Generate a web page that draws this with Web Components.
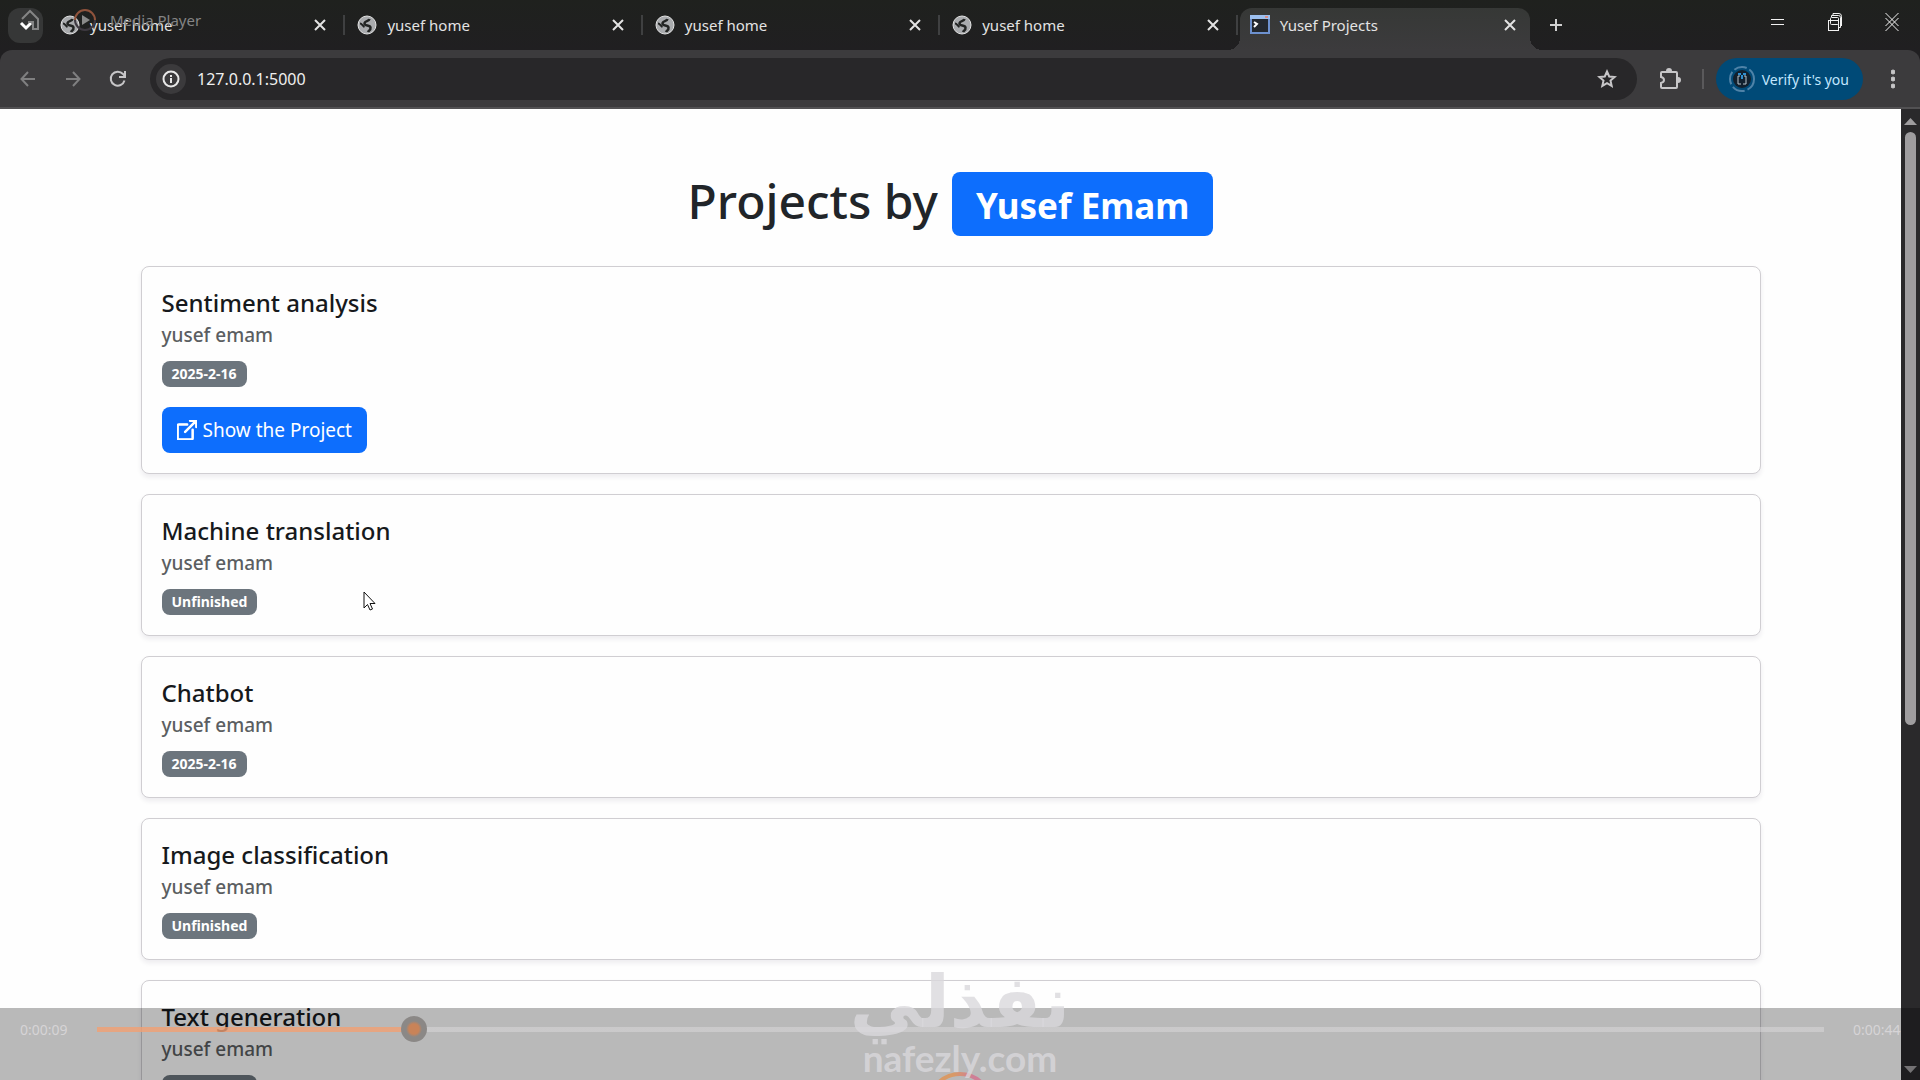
<!DOCTYPE html>
<html lang="en">
<head>
<meta charset="utf-8">
<title>Yusef Projects</title>
<style>
	body {
		margin: 0;
		height: 100vh;
		overflow: hidden;
		font-family: "Noto Sans", "Open Sans", sans-serif;
		color: #212529;
		background: #fefefe;
	}
</style>
</head>
<body>
<app-window>
	<tab-strip slot="tabs">
		<browser-tab>yusef home</browser-tab>
		<browser-tab>yusef home</browser-tab>
		<browser-tab>yusef home</browser-tab>
		<browser-tab>yusef home</browser-tab>
		<browser-tab active>Yusef Projects</browser-tab>
	</tab-strip>
	<tool-bar slot="toolbar" address="127.0.0.1:5000">Verify it's you</tool-bar>
	<project-list owner="Yusef Emam">
		<project-card status="2025-2-16" href="#sentiment">Sentiment analysis<span slot="author">yusef emam</span></project-card>
		<project-card status="Unfinished">Machine translation<span slot="author">yusef emam</span></project-card>
		<project-card status="2025-2-16">Chatbot<span slot="author">yusef emam</span></project-card>
		<project-card status="Unfinished">Image classification<span slot="author">yusef emam</span></project-card>
		<project-card status="Unfinished">Text generation<span slot="author">yusef emam</span></project-card>
	</project-list>
	<scroll-bar slot="scroll"></scroll-bar>
</app-window>
<player-title>Media Player</player-title>
<player-bar elapsed="0:00:09" remaining="0:00:44"></player-bar>
<water-mark>نفذلي<span slot="site">nafezly.com</span></water-mark>
<mouse-pointer></mouse-pointer>

<script>
// Helper function to open the shadow root and fill it
const render = (el, html) => {
	const shadow = el.attachShadow({ mode: 'open' });
	shadow.innerHTML = `<style>
		* { box-sizing: border-box; }
		svg { display: block; fill: none; stroke: currentColor; }
		button { font: inherit; color: inherit; background: none; border: 0; padding: 0; margin: 0; display: grid; place-items: center; }
	</style>` + html;
	return shadow;
};

const globeIcon = `
	<svg width="20" height="20" viewBox="0 0 20 20" stroke="none">
		<circle cx="10" cy="10" r="9" fill="#a9abae"/>
		<path d="M12.500 4c-.5 2.800-5 1.500-5 4.500s5.500 1 6 4-2 3-2.500 4.500" stroke="#222423" stroke-width="2.500"/>
		<path d="M3 8.500c2 0 2.500 2.500 4.500 3.500" stroke="#222423" stroke-width="2"/>
	</svg>`;

const consoleIcon = `
	<svg width="20" height="20" viewBox="0 0 20 20">
		<rect x="1" y="1" width="18" height="17" fill="#23282e" stroke="#6d91cf" stroke-width="2"/>
		<path d="M0 2h20" stroke="#9dc0f0" stroke-width="4"/>
		<path d="M15 2h3" stroke="#d98f8a" stroke-width="2"/>
		<path d="M4 7l3 2-3 3" stroke="#fff" stroke-width="2"/>
	</svg>`;

class AppWindow extends HTMLElement {
	constructor() {
		super();
		render(this, `
			<style>
			:host { display: flex; flex-direction: column; height: 100%; }
			.view { flex: 1; min-height: 0; display: flex; }
			main { flex: 1; overflow: hidden; }
			</style>
			<slot name="tabs"></slot>
			<slot name="toolbar"></slot>
			<div class="view">
				<main><slot></slot></main>
				<slot name="scroll"></slot>
			</div>
		`);
	}
}

class TabStrip extends HTMLElement {
	constructor() {
		super();
		render(this, `
			<style>
			:host { display: flex; height: 50px; background: linear-gradient(#1f211e, #201f21); color: #e3e3e3; }
			.search { width: 35px; height: 35px; margin: 8px 7px 0 8px; border-radius: 12px; background: #363737; color: #fff; }
			.tabs { flex: 1; display: flex; max-width: 1480px; }
			.add { width: 34px; height: 50px; margin-left: 9px; color: #d0d0d0; }
			.controls { margin-left: auto; display: flex; color: #f2f2f2; }
			.controls button { width: 57px; height: 44px; }
			</style>
			<button class="search" aria-label="Search tabs"><svg width="14" height="10" viewBox="0 0 14 10" stroke-width="3"><path d="M2 2l5 5 5-5"/></svg></button>
			<div class="tabs"><slot></slot></div>
			<button class="add" aria-label="New tab"><svg width="14" height="14" viewBox="0 0 14 14" stroke-width="2"><path d="M7 1v12M1 7h12"/></svg></button>
			<div class="controls">
				<button aria-label="Minimize"><svg width="14" height="14" viewBox="0 0 14 14"><path d="M0 4.500h13M0 9.500h13"/></svg></button>
				<button aria-label="Restore"><svg width="14" height="20" viewBox="0 0 14 20"><rect x=".5" y="8.500" width="10" height="10"/><rect x="2.500" y="5.500" width="8" height="7" rx="1"/><path d="M3.500 5V3.500h7q2 0 2 2v10H11M5 3V1.500h6q2.500 0 2.500 3V14"/></svg></button>
				<button aria-label="Close"><svg width="14" height="20" viewBox="0 0 14 20" stroke="#fff"><path d="M.5 1l13 13M13.500 1L.5 14M.5 6l13 13M13.500 6L.5 19"/></svg></button>
			</div>
		`);
	}
}

class BrowserTab extends HTMLElement {
	constructor() {
		super();
		render(this, `
			<style>
			:host { position: relative; flex: 1 1 297px; box-sizing: border-box; display: flex; align-items: center; height: 50px; padding: 0 2px 0 10px; font-size: 15px; }
			.title { flex: 1; margin-left: 10px; line-height: 20px; }
			button { width: 22px; height: 22px; }
			.sep { width: 2px; height: 20px; margin-left: 12px; background: #3f4041; }
			:host([active]) { flex-basis: 290px; height: 42px; margin-top: 8px; padding: 0 0 8px 10px; background: linear-gradient(#363836, #3c3b3d); border-radius: 12px 12px 0 0; }
			:host([active])::before, :host([active])::after { content: ""; position: absolute; bottom: 0; width: 12px; height: 12px; }
			:host([active])::before { left: -12px; background: radial-gradient(circle at 0 0, transparent 12px, #3c3b3d 12px); }
			:host([active])::after { right: -12px; background: radial-gradient(circle at 100% 0, transparent 12px, #3c3b3d 12px); }
			:host([active]) .sep { width: 0; margin-left: 9px; }
			</style>
			${this.hasAttribute('active') ? consoleIcon : globeIcon}
			<span class="title"><slot></slot></span>
			<button aria-label="Close tab"><svg width="12" height="12" viewBox="0 0 12 12" stroke-width="2"><path d="M1 1l10 10M11 1L1 11"/></svg></button>
			<span class="sep"></span>
		`);
	}
}

class ToolBar extends HTMLElement {
	constructor() {
		super();
		render(this, `
			<style>
			:host { display: block; background: #201f21; }
			.bar { display: flex; align-items: center; height: 59px; padding: 1px 9px 0 5px; background: #3c3b3d; border-bottom: 2px solid #525153; border-radius: 12px 12px 0 0; color: #c7c6c8; }
			.nav { width: 45px; height: 42px; }
			.off { color: #7f7f80; }
			.omnibox { flex: 1; display: flex; align-items: center; height: 42px; margin: 0 21px 0 10px; padding: 0 20px 0 6px; border-radius: 21px; background: #282729; }
			.info { width: 30px; height: 30px; border-radius: 15px; background: #3b3a3c; color: #e8e8e8; }
			input { flex: 1; min-width: 0; margin-left: 11px; padding: 0; border: 0; outline: 0; background: none; font: inherit; font-size: 16px; color: #efefef; }
			.sep { width: 2px; height: 20px; margin: 0 12px 0 20px; background: #5a595b; }
			.verify { display: flex; align-items: center; gap: 7px; height: 42px; padding: 0 14px 0 13px; border-radius: 21px; background: #004a77; color: #c2e7ff; font-size: 14px; white-space: nowrap; }
			.menu { width: 36px; height: 42px; margin-left: 12px; }
			</style>
			<div class="bar">
				<button class="nav off" aria-label="Back"><svg width="16" height="16" viewBox="0 0 16 16" stroke-width="2"><path d="M15 8H2M8 1L1.500 8 8 15"/></svg></button>
				<button class="nav off" aria-label="Forward"><svg width="16" height="16" viewBox="0 0 16 16" stroke-width="2"><path d="M1 8h13M8 1l6.500 7L8 15"/></svg></button>
				<button class="nav" aria-label="Reload"><svg width="18" height="18" viewBox="0 0 18 18" stroke-width="2"><path d="M15.500 10.500A7 7 0 1 1 14 4l2 2.500M16 1v6h-6"/></svg></button>
				<div class="omnibox">
					<button class="info" aria-label="Site information"><svg width="18" height="18" viewBox="0 0 18 18" stroke-width="2"><circle cx="9" cy="9" r="7.500"/><path d="M9 8v5M9 5v2"/></svg></button>
					<input type="text" aria-label="Address" value="${this.getAttribute('address')}">
					<button aria-label="Bookmark"><svg width="20" height="20" viewBox="0 0 20 20" stroke-width="2"><path d="M10 2.500l2.200 5 5.400.5-4.100 3.600 1.200 5.300L10 14.100l-4.700 2.800 1.200-5.300L2.400 8l5.400-.5z"/></svg></button>
				</div>
				<button aria-label="Extensions"><svg width="24" height="24" viewBox="0 0 24 24" stroke-width="2"><path d="M4 5h14q1 0 1 1v14q0 1-1 1H4q-1 0-1-1v-4c4-1 4-5 0-6V6q0-1 1-1z"/><path d="M8 4a3 3 0 0 1 6 0zM20 10a3 3 0 0 1 0 6z" fill="currentColor" stroke="none"/></svg></button>
				<span class="sep"></span>
				<button class="verify">
					<svg width="26" height="26" viewBox="0 0 26 26"><circle cx="13" cy="13" r="9" fill="#12202d" stroke="none"/><circle cx="13" cy="13" r="12" stroke="#4f83a8" stroke-width="2" stroke-dasharray="13 3"/><path d="M11 10H9v8h3M15 10h2v8h-3" stroke="#b9c4cc"/><path d="M9 8h3M14 8h3M13 9v4" stroke="#2f8fd0" stroke-width="2"/></svg>
					<slot></slot>
				</button>
				<button class="menu" aria-label="Menu"><svg width="4" height="20" viewBox="0 0 4 20" stroke="none" style="fill:currentColor"><circle cx="2" cy="3" r="2"/><circle cx="2" cy="10" r="2"/><circle cx="2" cy="17" r="2"/></svg></button>
			</div>
		`);
	}
}

class ProjectList extends HTMLElement {
	constructor() {
		super();
		render(this, `
			<style>
			:host { display: block; max-width: 1620px; margin: 0 auto; padding-top: 63px; }
			h1 { display: flex; justify-content: center; align-items: center; gap: 14px; margin: 0 0 30px; font-size: 48px; line-height: 58px; font-weight: 500; }
			h1 span { padding-bottom: 6px; }
			h1 a { height: 64px; padding: 2px 24px 0; border-radius: 8px; background: #0d6efd; color: #fff; font-size: 35px; line-height: 64px; font-weight: 700; text-decoration: none; }
			.cards { display: grid; gap: 20px; }
			</style>
			<h1><span>Projects by</span><a href="#owner">${this.getAttribute('owner')}</a></h1>
			<div class="cards"><slot></slot></div>
		`);
	}
}

class ProjectCard extends HTMLElement {
	constructor() {
		super();
		const href = this.getAttribute('href');
		// Only finished projects with a page get the button
		const link = href ? `
			<a href="${href}">
				<svg width="20" height="20" viewBox="0 0 16 16" stroke="none" style="fill:currentColor"><path d="M8.636 3.500a.5.5 0 0 0-.5-.5H1.500A1.500 1.500 0 0 0 0 4.500v10A1.500 1.500 0 0 0 1.500 16h10a1.500 1.500 0 0 0 1.500-1.500V7.864a.5.5 0 0 0-1 0V14.500a.5.5 0 0 1-.5.5h-10a.5.5 0 0 1-.5-.5v-10a.5.5 0 0 1 .5-.5h6.636a.5.5 0 0 0 .5-.5z"/><path d="M16 .5a.5.5 0 0 0-.5-.5h-5a.5.5 0 0 0 0 1h3.793L6.146 9.146a.5.5 0 1 0 .708.708L15 1.707V5.500a.5.5 0 0 0 1 0v-5z"/></svg>
				Show the Project
			</a>` : '';
		render(this, `
			<style>
			:host { display: flex; flex-direction: column; align-items: flex-start; box-sizing: border-box; padding: 20px; border: 1px solid #d0ced2; border-radius: 8px; background: #fefefe; box-shadow: 0 3px 5px rgba(40, 20, 60, .08); }
			h5 { margin: 0 0 4px; font-size: 24px; line-height: 32px; font-weight: 500; color: #16191c; }
			h6 { margin: 0 0 14px; font-size: 19px; line-height: 24px; font-weight: 500; color: #5b5e61; }
			.badge { height: 26px; padding: 0 10px; border-radius: 8px; background: #6c757d; color: #fff; font-size: 14px; line-height: 26px; font-weight: 700; }
			a { display: flex; align-items: center; gap: 6px; height: 46px; margin-top: 20px; padding: 0 15px; border-radius: 8px; background: #0d6efd; color: #fff; font-size: 19px; text-decoration: none; }
			</style>
			<h5><slot></slot></h5>
			<h6><slot name="author"></slot></h6>
			<span class="badge">${this.getAttribute('status')}</span>
			${link}
		`);
	}
}

class ScrollBar extends HTMLElement {
	constructor() {
		super();
		render(this, `
			<style>
			:host { display: flex; flex-direction: column; align-items: center; width: 19px; padding: 8px 0 6px; box-sizing: border-box; background: #2a292b; color: #9f9d9f; }
			.track { flex: 1; width: 11px; margin: 6px 0; }
			.thumb { height: 64%; border-radius: 6px; background: #9f9d9f; }
			svg { fill: currentColor; stroke: none; }
			</style>
			<svg width="13" height="9" viewBox="0 0 13 9"><path d="M0 8l6.500-7L13 8z"/></svg>
			<div class="track"><div class="thumb"></div></div>
			<svg width="13" height="9" viewBox="0 0 13 9"><path d="M0 1l6.500 7L13 1z"/></svg>
		`);
	}
}

// Title bar of the video player, faded over the tabs
class PlayerTitle extends HTMLElement {
	constructor() {
		super();
		render(this, `
			<style>
			:host { position: absolute; top: 8px; left: 20px; display: flex; align-items: center; height: 24px; font-size: 15px; color: #858585; pointer-events: none; }
			.play { margin: 0 14px 0 34px; }
			</style>
			<svg width="20" height="22" viewBox="0 0 20 22" stroke-width="2"><path d="M2 10l8-8 8 8v10h-5v-7H8"/></svg>
			<svg class="play" width="22" height="22" viewBox="0 0 22 22"><path d="M1 11a10 10 0 0 1 20 0" stroke="#90533c" stroke-width="2"/><path d="M21 11a10 10 0 0 1-20 0" stroke="#3f3a42" stroke-width="2"/><path d="M8 6l8 5-8 5z" fill="#8a8a8a" stroke="none"/></svg>
			<slot></slot>
		`);
	}
}

class PlayerBar extends HTMLElement {
	constructor() {
		super();
		render(this, `
			<style>
			:host { position: absolute; left: 0; right: 0; bottom: 0; height: 72px; overflow: hidden; background: rgba(0, 0, 0, .27); color: #d6d4d6; font-size: 14px; }
			.seek { display: flex; align-items: center; height: 42px; padding: 0 19px 0 20px; }
			.seek span { width: 48px; }
			input { flex: 1; height: 26px; margin: 0 29px; appearance: none; background: linear-gradient(90deg, rgba(242, 160, 115, .8) 18%, rgba(220, 218, 220, .5) 18%) center / 100% 5px no-repeat; }
			input::-webkit-slider-thumb { appearance: none; width: 26px; height: 26px; border-radius: 13px; background: radial-gradient(circle, #c98358 5px, #8b8886 8px); }
			.play { margin: 22px auto 0; }
			</style>
			<div class="seek">
				<span>${this.getAttribute('elapsed')}</span>
				<input type="range" aria-label="Seek" min="0" max="1000" value="179">
				<span>${this.getAttribute('remaining')}</span>
			</div>
			<button class="play" aria-label="Play"><svg width="66" height="66" viewBox="0 0 66 66">
				<defs><linearGradient id="ring"><stop offset=".4" stop-color="#d99a66"/><stop offset=".7" stop-color="#cf7f96"/></linearGradient></defs>
				<circle cx="33" cy="33" r="31" stroke="url(#ring)" stroke-width="4"/>
			</svg></button>
		`);
	}
}

class WaterMark extends HTMLElement {
	constructor() {
		super();
		render(this, `
			<style>
			:host { position: absolute; left: 0; right: 0; bottom: 0; display: flex; flex-direction: column; align-items: center; color: rgba(218, 216, 220, .8); pointer-events: none; }
			.brand { font: 700 72px/68px "DejaVu Sans", sans-serif; }
			.site { font: 700 37px/44px Lato, sans-serif; }
			</style>
			<div class="brand" lang="ar"><slot></slot></div>
			<div class="site"><slot name="site"></slot></div>
		`);
	}
}

class MousePointer extends HTMLElement {
	constructor() {
		super();
		render(this, `
			<style>
			:host { position: absolute; top: 591px; left: 363px; }
			</style>
			<svg width="14" height="20" viewBox="0 0 14 20"><path d="M1 1v16l3.500-3.500 2.500 5.500 2.500-1-2.500-5.500h5z" fill="#fff" stroke="#111"/></svg>
		`);
	}
}

customElements.define('app-window', AppWindow);
customElements.define('tab-strip', TabStrip);
customElements.define('browser-tab', BrowserTab);
customElements.define('tool-bar', ToolBar);
customElements.define('project-list', ProjectList);
customElements.define('project-card', ProjectCard);
customElements.define('scroll-bar', ScrollBar);
customElements.define('player-title', PlayerTitle);
customElements.define('player-bar', PlayerBar);
customElements.define('water-mark', WaterMark);
customElements.define('mouse-pointer', MousePointer);
</script>
</body>
</html>
